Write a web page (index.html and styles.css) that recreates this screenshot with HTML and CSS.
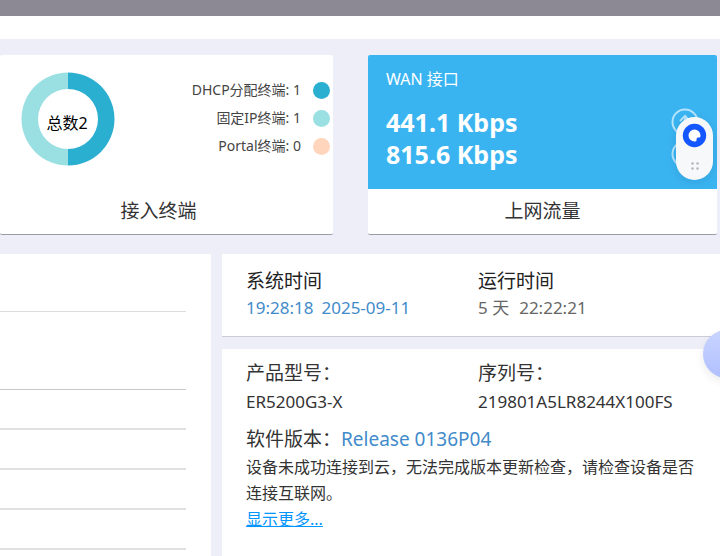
FILE: index.html
```html
<!DOCTYPE html>
<html lang="zh-CN">
<head>
    <meta charset="UTF-8" />
    <meta name="viewport" content="width=device-width, initial-scale=1.0" />
    <title>系统信息</title>
    <link rel="stylesheet" href="styles.css">
</head>
<body>
    <div class="topbar"></div>
    <div class="subbar"></div>
    <main>
        <div class="cards">
            <section class="card">
                <div class="terminal">
                    <svg class="donut" width="94" height="96" viewBox="0 0 94 96">
                        <path d="M47 1.500A46.500 46.500 0 0 1 47 94.500V78A30 30 0 0 0 47 18Z" fill="#2bafd1" />
                        <path d="M47 1.500A46.500 46.500 0 0 0 47 94.500V78A30 30 0 0 1 47 18Z" fill="#9adfe2" />
                        <text x="46" y="58" text-anchor="middle">总数2</text>
                    </svg>
                    <ul class="legend">
                        <li>DHCP分配终端: 1<i class="dot dhcp"></i></li>
                        <li>固定IP终端: 1<i class="dot fixed"></i></li>
                        <li>Portal终端: 0<i class="dot portal"></i></li>
                    </ul>
                </div>
                <h2>接入终端</h2>
            </section>
            <section class="card">
                <div class="wan">
                    <p class="name">WAN 接口</p>
                    <div class="rate">
                        <span>441.1 Kbps</span>
                        <svg width="28" height="28" viewBox="0 0 28 28">
                            <circle cx="14" cy="14" r="12.500" />
                            <path d="M14 21V8M9 13l5-5 5 5" />
                        </svg>
                    </div>
                    <div class="rate">
                        <span>815.6 Kbps</span>
                        <svg width="28" height="28" viewBox="0 0 28 28">
                            <circle cx="14" cy="14" r="12.500" />
                            <path d="M14 7v13M9 15l5 5 5-5" />
                        </svg>
                    </div>
                </div>
                <h2>上网流量</h2>
            </section>
        </div>
        <div class="panels">
            <section class="panel list">
                <div class="row title"></div>
                <div class="row head"></div>
                <div class="row"></div>
                <div class="row"></div>
                <div class="row"></div>
                <div class="row"></div>
            </section>
            <div class="side">
                <section class="panel time">
                    <div>
                        <h3>系统时间</h3>
                        <p class="clock"><span>19:28:18</span><span>2025-09-11</span></p>
                    </div>
                    <div>
                        <h3>运行时间</h3>
                        <p class="uptime"><span>5 天</span><span>22:22:21</span></p>
                    </div>
                </section>
                <section class="panel device">
                    <div class="model">
                        <div>
                            <h3>产品型号：</h3>
                            <p>ER5200G3-X</p>
                        </div>
                        <div>
                            <h3>序列号：</h3>
                            <p>219801A5LR8244X100FS</p>
                        </div>
                    </div>
                    <h3>软件版本：<span class="version">Release 0136P04</span></h3>
                    <p class="tip">设备未成功连接到云，无法完成版本更新检查，请检查设备是否连接互联网。</p>
                    <a class="more" href="#">显示更多...</a>
                </section>
            </div>
        </div>
    </main>
    <button class="widget" aria-label="助手">
        <svg width="37" height="63" viewBox="0 0 37 63">
            <circle cx="18.500" cy="18.500" r="11.700" fill="#1456ff" />
            <path d="M24.500 18.500A6 6 0 1 0 18.500 24.500C20 24.500 20.500 24 20.500 23C20.500 21 21 20.500 23 20.500C24 20.500 24.500 20 24.500 18.500Z" fill="#fff" />
            <g fill="#b4b6c0">
                <circle cx="16.500" cy="46.500" r="1.300" />
                <circle cx="21.500" cy="46.500" r="1.300" />
                <circle cx="16.500" cy="51.500" r="1.300" />
                <circle cx="21.500" cy="51.500" r="1.300" />
            </g>
        </svg>
    </button>
    <button class="bubble" aria-label="客服"></button>
</body>
</html>
```
FILE: styles.css
```css
* {
    box-sizing: border-box;
}
body {
    margin: 0;
    min-height: 100vh;
    display: flex;
    flex-direction: column;
    position: relative;
    overflow: hidden;
    background-color: #eeeef8;
    color: #333;
    font-family: "Noto Sans", "Noto Sans CJK SC", sans-serif;
    font-size: 16px;
    line-height: 26px;
}
h2, h3, p, ul {
    margin: 0;
    padding: 0;
    font-weight: 400;
}
.topbar {
    height: 16px;
    background-color: #8c8994;
}
.subbar {
    height: 23px;
    background-color: #fff;
}
main {
    flex: 1;
    display: flex;
    flex-direction: column;
    padding-top: 16px;
}
.cards {
    display: grid;
    grid-template-columns: 333fr 349fr;
    gap: 35px;
    padding-right: 3px;
}
.card {
    background-color: #fff;
    border-bottom: 1px solid #9c9ca4;
    border-radius: 2px;
    overflow: hidden;
}
.card h2 {
    font-size: 19px;
    line-height: 45px;
    text-align: center;
}
.card:first-child h2 {
    padding-right: 16px;
}
.terminal {
    height: 134px;
    display: flex;
    justify-content: space-between;
    padding: 16px 3px 0 21px;
}
.donut text {
    font-size: 16px;
    fill: #000;
}
.legend {
    list-style: none;
    padding-top: 5px;
    font-size: 14px;
    color: #444;
}
.legend li {
    display: flex;
    justify-content: flex-end;
    align-items: center;
    gap: 12px;
    line-height: 28px;
}
.dot {
    width: 17px;
    height: 17px;
    border-radius: 50%;
}
.dhcp {
    background-color: #2bafd1;
}
.fixed {
    background-color: #9adfe2;
}
.portal {
    background-color: #ffd5bb;
}
.wan {
    height: 134px;
    padding: 11px 18px;
    background-color: #3ab4f0;
    color: #fff;
}
.name {
    margin-bottom: 14px;
}
.rate {
    display: flex;
    justify-content: space-between;
    align-items: center;
    font-size: 25px;
    font-weight: 700;
    line-height: 32px;
}
.rate svg {
    fill: none;
    stroke: #b5e3fc;
    stroke-width: 2;
}
.panels {
    flex: 1;
    display: grid;
    grid-template-columns: 211fr 498fr;
    gap: 11px;
    padding-top: 19px;
}
.panel {
    background-color: #fff;
}
.list {
    padding-right: 25px;
}
.row {
    height: 40px;
    border-bottom: 2px solid #e0e0e0;
}
.title {
    height: 58px;
    border-bottom: 1px solid #dcdcdc;
}
.head {
    height: 78px;
    border-bottom: 1px solid #c8c8c8;
}
.side {
    display: flex;
    flex-direction: column;
    gap: 12px;
}
h3 {
    font-size: 19px;
    line-height: 28px;
}
.time, .model {
    display: grid;
    grid-template-columns: 232fr 242fr;
}
.time {
    padding: 13px 0 15px 24px;
    border-bottom: 1px solid #ccccd4;
}
.time h3 {
    color: #222;
}
.clock, .uptime {
    display: flex;
    gap: 8px;
    font-size: 17px;
}
.clock, .version {
    color: #428bca;
}
.uptime {
    gap: 10px;
    color: #666;
}
.device {
    flex: 1;
    padding: 10px 14px 16px 24px;
}
.model {
    margin-right: -14px;
    padding-bottom: 8px;
}
.model p {
    font-size: 17px;
    line-height: 30px;
}
.tip {
    padding-top: 1px;
}
.more {
    color: #0095ff;
}
.widget {
    position: absolute;
    top: 117px;
    right: 7px;
    padding: 0;
    border: none;
    border-radius: 19px;
    background-color: #f7f8fa;
    box-shadow: 0 2px 8px rgba(0, 60, 120, 0.15);
    cursor: pointer;
}
.widget svg {
    display: block;
}
.bubble {
    position: absolute;
    top: 330px;
    right: -31px;
    width: 48px;
    height: 48px;
    border: none;
    border-radius: 50%;
    background-image: linear-gradient(#c8d4ff, #b0c0ff);
    box-shadow: 0 4px 10px rgba(0, 0, 0, 0.08);
    cursor: pointer;
}
```
